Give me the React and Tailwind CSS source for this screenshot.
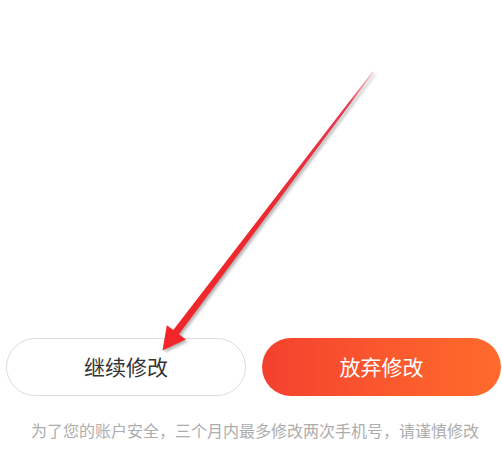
const notice = "为了您的账户安全，三个月内最多修改两次手机号，请谨慎修改"

function Arrow() {
  // shaft tapers from the tail (upper right) to the head (lower left)
  return (
    <svg
      className="absolute left-0 top-0 pointer-events-none drop-shadow-[2px_2px_1.5px_rgba(0,0,0,0.3)]"
      width="502"
      height="460"
      viewBox="0 0 502 460"
    >
      <defs>
        <linearGradient id="shaft" x1="373" y1="72" x2="170" y2="340" gradientUnits="userSpaceOnUse">
          <stop offset="0" stopColor="#f3b8c4" stopOpacity="0.7" />
          <stop offset="0.12" stopColor="#e23a52" />
          <stop offset="0.5" stopColor="#ec2a30" />
          <stop offset="1" stopColor="#f2262a" />
        </linearGradient>
      </defs>
      <polygon
        points="373.6,72.4 372.4,71.6 173.3,330.1 166.8,325.3 162.5,350.5 185.8,339.6 178.9,334.3"
        fill="url(#shaft)"
      />
    </svg>
  )
}

export default function App() {
  return (
    <div className="relative w-[502px] h-[460px] bg-white overflow-hidden font-['Noto_Sans_CJK_SC','Noto_Sans',sans-serif]">
      <div className="flex flex-col pt-[338px]">
        {/* Buttons */}
        <div className="flex gap-[16px] pl-[6px]">
          <button className="w-[240px] h-[58px] rounded-full border border-[#dcdcdc] bg-white text-[21px] text-[#333333] flex items-center justify-center">
            继续修改
          </button>
          <button className="w-[239px] h-[58px] rounded-full bg-gradient-to-r from-[#f4402f] to-[#ff6b2b] text-[21px] text-white flex items-center justify-center">
            放弃修改
          </button>
        </div>

        {/* Notice */}
        <p className="mt-[22px] text-center text-[16px] leading-[24px] text-[#adadad] pl-[8px]">
          {notice}
        </p>
      </div>

      <Arrow />
    </div>
  )
}
